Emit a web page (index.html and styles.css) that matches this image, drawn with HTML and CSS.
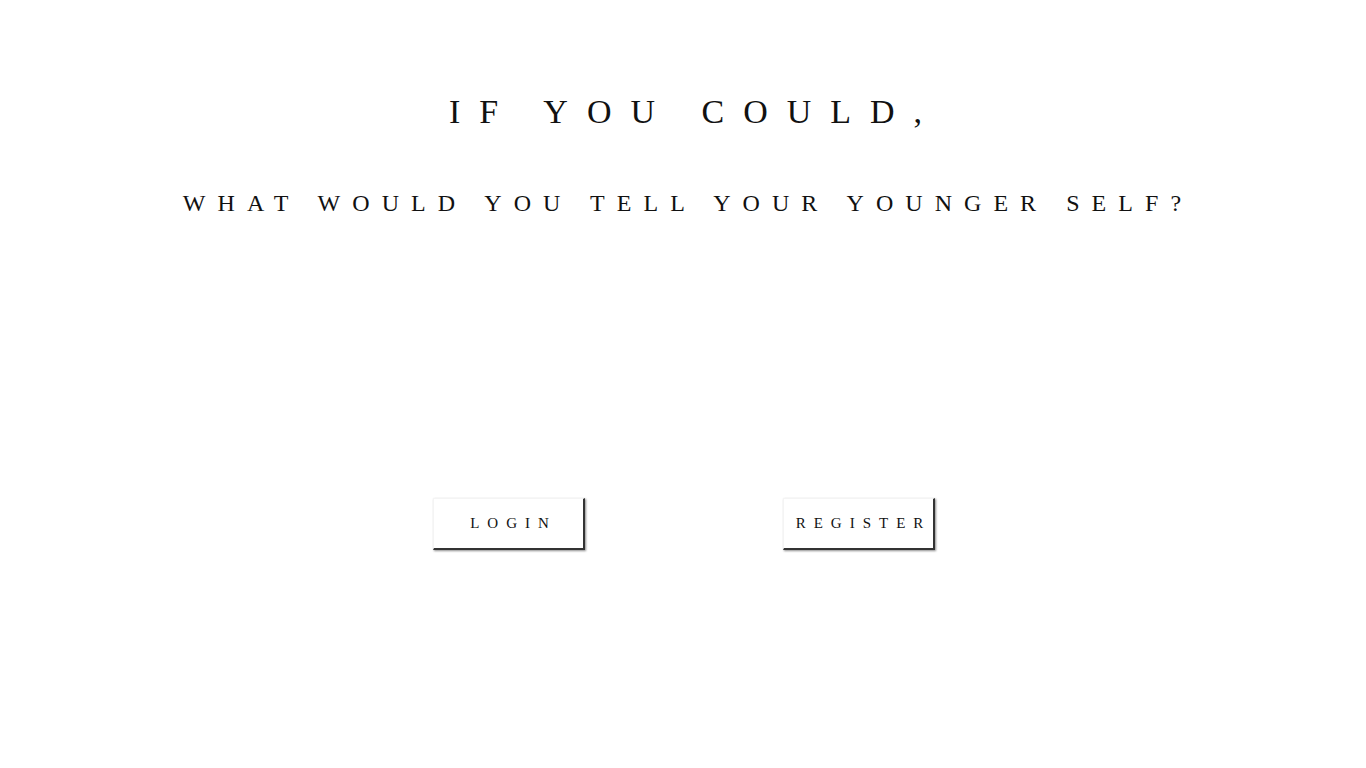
FILE: index.html
```html
<!DOCTYPE html>
<html lang="en">
<head>
<meta charset="utf-8">
<title>If you could</title>
<link rel="stylesheet" href="styles.css">
</head>
<body>
<main class="page">
  <h1 class="title">IF YOU COULD,</h1>
  <h2 class="subtitle">WHAT WOULD YOU TELL YOUR YOUNGER SELF?</h2>
  <div class="actions">
    <a class="btn" href="#">LOGIN</a>
    <a class="btn" href="#">REGISTER</a>
  </div>
</main>
</body>
</html>
```
FILE: styles.css
```css
html, body {
  margin: 0;
  padding: 0;
  background: #fff;
}
body {
  font-family: "Liberation Serif", "Times New Roman", serif;
  color: #111;
}
.page {
  display: flex;
  flex-direction: column;
  align-items: center;
  padding-top: 92px;
  padding-bottom: 100px;
}
.title {
  margin: 0;
  font-weight: normal;
  font-size: 34px;
  line-height: 40px;
  letter-spacing: 19px;
  padding-left: 24px;
}
.subtitle {
  margin: 57px 0 0;
  font-weight: normal;
  font-size: 24px;
  line-height: 28px;
  letter-spacing: 12.05px;
  padding-left: 10px;
}
.actions {
  display: flex;
  gap: 198px;
  margin-top: 281px;
  padding-left: 2px;
}
.btn {
  display: flex;
  align-items: center;
  justify-content: center;
  box-sizing: border-box;
  width: 152px;
  height: 52px;
  padding-left: 10px;
  background: #fff;
  border-top: 1px solid #f4f4f4;
  border-left: 1px solid #f4f4f4;
  border-right: 2px solid #333;
  border-bottom: 2px solid #333;
  box-shadow: 1px 1px 2px rgba(0, 0, 0, 0.45);
  color: #111;
  text-decoration: none;
  font-size: 15px;
  line-height: 17px;
  letter-spacing: 8px;
}
```
